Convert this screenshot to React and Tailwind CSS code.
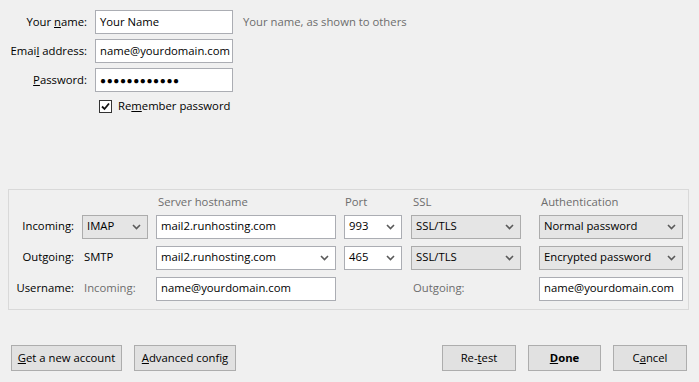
import React from 'react';

const font = { fontFamily: '"Open Sans", "Noto Sans", Arial, sans-serif' };

function Chevron() {
  return (
    <svg width="9" height="6" viewBox="0 0 9 6" className="shrink-0">
      <path d="M1 1 L4.5 4.5 L8 1" fill="none" stroke="#5a5a5a" strokeWidth="1.6" />
    </svg>
  );
}

function TextBox({ value, className = '' }) {
  return (
    <div className={`h-[24px] bg-white border border-[#abadb3] flex items-center px-[4px] overflow-hidden whitespace-nowrap ${className}`}>
      {value}
    </div>
  );
}

function Select({ value, editable, className = '' }) {
  return (
    <div
      className={`h-[24px] border flex items-center justify-between pl-[4px] pr-[6px] whitespace-nowrap ${
        editable ? 'bg-white border-[#abadb3]' : 'bg-[#e5e5e5] border-[#acacac]'
      } ${className}`}
    >
      <span>{value}</span>
      <Chevron />
    </div>
  );
}

function Btn({ children, className = '' }) {
  return (
    <button className={`h-[26px] bg-[#e1e1e1] border border-[#adadad] text-black flex items-center justify-center ${className}`}>
      {children}
    </button>
  );
}

export default function App() {
  return (
    <div style={font} className="w-[699px] h-[382px] bg-[#f0f0f0] text-[11.3px] text-black flex flex-col overflow-hidden">
      {/* identity fields */}
      <div className="pt-[10px] flex flex-col gap-[4px]">
        <div className="flex items-center">
          <label className="w-[87px] text-right">Your <u>n</u>ame:</label>
          <TextBox value="Your Name" className="ml-[8px] w-[138px]" />
          <span className="ml-[10px] text-[#6d6d6d]">Your name, as shown to others</span>
        </div>
        <div className="flex items-center mt-[1px]">
          <label className="w-[87px] text-right">Emai<u>l</u> address:</label>
          <TextBox value="name@yourdomain.com" className="ml-[8px] w-[138px]" />
        </div>
        <div className="flex items-center mt-[1px]">
          <label className="w-[87px] text-right"><u>P</u>assword:</label>
          <TextBox
            value={<span className="text-[10px] tracking-[0.6px]">●●●●●●●●●●●●</span>}
            className="ml-[8px] w-[138px]"
          />
        </div>
        <div className="flex items-center ml-[99px] mt-[2px]">
          <div className="w-[13px] h-[13px] border border-[#333] bg-white flex items-center justify-center">
            <svg width="11" height="11" viewBox="0 0 11 11">
              <path d="M2 5.5 L4.5 8 L9 2.5" fill="none" stroke="#111" strokeWidth="1.8" />
            </svg>
          </div>
          <span className="ml-[6px]">Re<u>m</u>ember password</span>
        </div>
      </div>

      {/* server settings group */}
      <div className="mt-[74px] ml-[8px] w-[681px] h-[121px] border border-[#d9d9d9] pt-[4px]">
        <div className="grid grid-cols-[65px_66px_180px_59px_120px_144px] gap-x-[8px] items-center">
          <div />
          <div />
          <div className="h-[16px] pl-[2px] text-[#6d6d6d] leading-[16px]">Server hostname</div>
          <div className="pl-[1px] text-[#6d6d6d] leading-[16px]">Port</div>
          <div className="pl-[2px] text-[#6d6d6d] leading-[16px]">SSL</div>
          <div className="pl-[2px] text-[#6d6d6d] leading-[16px]">Authentication</div>
        </div>

        <div className="grid grid-cols-[65px_66px_180px_59px_120px_144px] gap-x-[8px] gap-y-[7px] items-center mt-[5px]">
          <div className="text-right">Incoming:</div>
          <Select value="IMAP" />
          <TextBox value="mail2.runhosting.com" />
          <Select value="993" editable className="w-[58px]" />
          <Select value="SSL/TLS" className="w-[110px]" />
          <Select value="Normal password" />

          <div className="text-right">Outgoing:</div>
          <div className="pl-[2px]">SMTP</div>
          <Select value="mail2.runhosting.com" editable />
          <Select value="465" editable className="w-[58px]" />
          <Select value="SSL/TLS" className="w-[110px]" />
          <Select value="Encrypted password" />

          <div className="text-right">Username:</div>
          <div className="pl-[2px] text-[#6d6d6d]">Incoming:</div>
          <TextBox value="name@yourdomain.com" />
          <div />
          <div className="pl-[2px] text-[#6d6d6d]">Outgoing:</div>
          <TextBox value="name@yourdomain.com" />
        </div>
      </div>

      {/* buttons */}
      <div className="mt-auto pb-[11px] px-[11px] flex items-center">
        <Btn className="w-[111px]"><span><u>G</u>et a new account</span></Btn>
        <Btn className="w-[102px] ml-[12px]"><span><u>A</u>dvanced config</span></Btn>
        <div className="flex-1" />
        <Btn className="w-[74px]"><span>Re-<u>t</u>est</span></Btn>
        <Btn className="w-[73px] ml-[12px] font-bold"><span><u>D</u>one</span></Btn>
        <Btn className="w-[74px] ml-[12px] mr-[1px]"><span>C<u>a</u>ncel</span></Btn>
      </div>
    </div>
  );
}
